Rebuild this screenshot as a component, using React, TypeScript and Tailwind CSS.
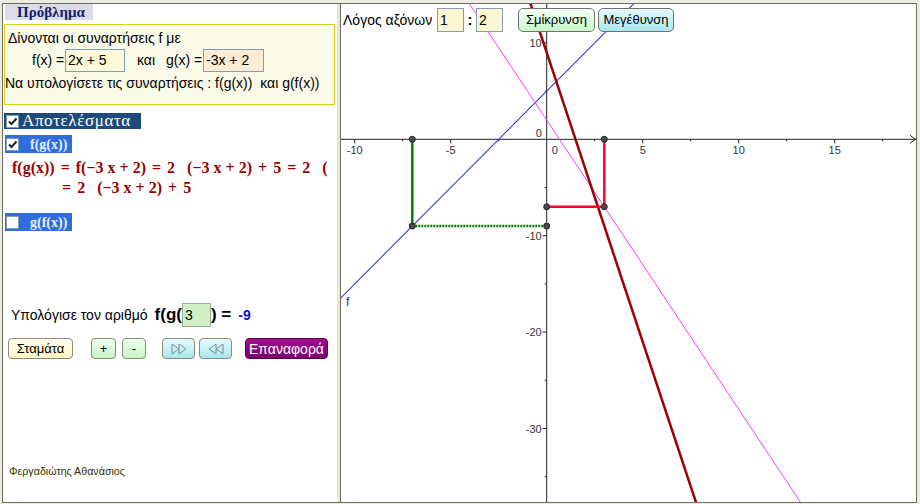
import React from 'react';

const OX = 205.7;
const OY = 135.3;
const UX = 19.2;
const UY = 9.64;
const px = (x: number) => OX + UX * x;
const py = (y: number) => OY - UY * y;

function Check({checked}: {checked: boolean}) {
    return (
        <span className="flex h-[13px] w-[13px] shrink-0 items-center justify-center border border-[#7f9db9] bg-white">
            {checked && (
                <svg width="11" height="11" viewBox="0 0 11 11">
                    <path d="M2 5.5 L4.5 8 L9.5 2.5" stroke="#222" strokeWidth="2" fill="none"/>
                </svg>
            )}
        </span>
    );
}

function Op({children}: {children: React.ReactNode}) {
    return <span className="mx-[6px]">{children}</span>;
}

function Graph() {
    const xTicks = [-10, -7.5, -5, -2.5, 2.5, 5, 7.5, 10, 12.5, 15, 17.5];
    const yTicks = [10, 5, -5, -10, -15, -20, -25, -30, -35];
    const pts: [number, number][] = [[-7, 0], [-7, -9], [0, -9], [3, 0], [3, -7], [0, -7]];
    return (
        <svg className="absolute inset-0" width="575" height="498" viewBox="0 0 575 498">
            {/* axes */}
            <line x1="0" y1={OY} x2="575" y2={OY} stroke="#222" strokeWidth="1"/>
            <path d={`M569 ${OY - 4} L574.5 ${OY} L569 ${OY + 4}`} stroke="#222" fill="none"/>
            <line x1={OX} y1="0" x2={OX} y2="498" stroke="#222" strokeWidth="1"/>
            {xTicks.map((t) => (
                <line key={t} x1={px(t)} y1={OY} x2={px(t)} y2={OY + (t % 5 === 0 ? 4 : 2)} stroke="#222"/>
            ))}
            {yTicks.map((t) => (
                <line key={t} x1={OX} y1={py(t)} x2={OX - (t % 10 === 0 ? 4 : 2)} y2={py(t)} stroke="#222"/>
            ))}
            <g fontFamily="'Liberation Sans', Arial, sans-serif" fontSize="11" fill="#333">
                {[-10, -5, 5, 10, 15].map((t) => (
                    <text key={t} x={px(t)} y={OY + 15} textAnchor="middle">{t < 0 ? `-${-t}` : t}</text>
                ))}
                <text x={OX + 5} y={OY + 15}>0</text>
                <text x={OX - 11} y={OY - 2}>0</text>
                {[10, -10, -20, -30].map((t) => (
                    <text key={t} x={OX - 5} y={py(t) + 4} textAnchor="end">{t < 0 ? `-${-t}` : t}</text>
                ))}
                <text x="5" y="302" fill="#2222cc" fontSize="12">f</text>
            </g>
            {/* f(x) = 2x + 5 */}
            <line x1={px(-11)} y1={py(-17)} x2={px(5)} y2={py(15)} stroke="#3a3ad8" strokeWidth="1.1"/>
            {/* g(x) = -3x + 2 */}
            <line x1={px(-5)} y1={py(17)} x2={px(14)} y2={py(-40)} stroke="#ff3cff" strokeWidth="1"/>
            {/* f(g(x)) = -6x + 9 */}
            <line x1={px(-1)} y1={py(15)} x2={px(8)} y2={py(-39)} stroke="#990000" strokeWidth="2.5"/>
            <line x1={px(-7)} y1={py(0)} x2={px(-7)} y2={py(-9)} stroke="#0a7a0a" strokeWidth="2.5"/>
            <line x1={px(-7)} y1={py(-9)} x2={px(0)} y2={py(-9)} stroke="#0a7a0a" strokeWidth="2.5" strokeDasharray="2 1"/>
            {/* construction for g at x = 3 */}
            <line x1={px(3)} y1={py(0)} x2={px(3)} y2={py(-7)} stroke="#ff0033" strokeWidth="2.5"/>
            <line x1={px(0)} y1={py(-7)} x2={px(3)} y2={py(-7)} stroke="#ff0033" strokeWidth="2.5"/>
            {pts.map(([x, y]) => (
                <circle key={`${x},${y}`} cx={px(x)} cy={py(y)} r="3" fill="#4a4a4a" stroke="#222" strokeWidth="1"/>
            ))}
        </svg>
    );
}

function Tri({dir}: {dir: 'r' | 'l'}) {
    const a = dir === 'r' ? 'M1 1 L8 6 L1 11 Z M8 1 L15 6 L8 11 Z' : 'M8 1 L1 6 L8 11 Z M15 1 L8 6 L15 11 Z';
    return (
        <svg width="16" height="12" viewBox="0 0 16 12">
            <path d={a} stroke="#7a8a90" strokeWidth="1" fill="none"/>
        </svg>
    );
}

export default function App() {
    return (
        <div className="h-[504px] w-[920px] bg-[#ecebe4] pl-[2px] pt-[3px] font-['Liberation_Sans',Arial,sans-serif] text-black">
            <div className="flex h-[500px] w-[915px] border border-[#6e6e5e] bg-white">
                {/* left pane */}
                <div className="flex w-[337px] shrink-0 flex-col overflow-hidden border-r-[3px] border-[#e9e5d8]">
                    <div className="ml-[2px] flex h-[16px] w-[88px] items-center bg-[#dcdce6] pl-[12px] font-['Liberation_Serif',serif] text-[15px] font-bold text-[#14206e]">
                        Πρόβλημα
                    </div>
                    <div className="ml-[1px] mt-[4px] h-[81px] w-[331px] border border-[#d6cf1c] bg-[#fafae8] text-[14px]">
                        <div className="mt-[5px] pl-[3px] leading-[16px]">Δίνονται οι συναρτήσεις f με</div>
                        <div className="mt-[3px] flex h-[23px] items-center pl-[27px]">
                            <span className="w-[33px] whitespace-nowrap">f(x) =</span>
                            <span className="flex h-[23px] w-[60px] items-center border border-[#7f9db9] bg-[#fdf8d8] pl-[2px]">2x + 5</span>
                            <span className="ml-[12px] w-[29px]">και</span>
                            <span className="w-[37px] whitespace-nowrap">g(x) =</span>
                            <span className="flex h-[23px] w-[61px] items-center border border-[#7f9db9] bg-[#fdebd5] pl-[2px]">-3x + 2</span>
                        </div>
                        <div className="mt-[3px] whitespace-nowrap leading-[16px]">Να υπολογίσετε τις συναρτήσεις : f(g(x))&nbsp; και g(f(x))</div>
                    </div>
                    <div className="ml-[1px] mt-[8px] flex h-[16px] w-[137px] items-center gap-[3px] bg-[#1d4a78] pl-[2px] font-['Liberation_Serif',serif] text-[17px] tracking-[0.6px] text-white">
                        <Check checked/>
                        <span>Αποτελέσματα</span>
                    </div>
                    <div className="ml-[2px] mt-[6px] flex h-[18px] w-[67px] items-center bg-[#2f6ddd] pl-[1px] font-['Liberation_Serif',serif] text-[14px] font-bold text-[#e6f0ff]">
                        <Check checked/>
                        <span className="ml-[11px]">f(g(x))</span>
                    </div>
                    <div className="ml-[9px] mt-[5px] whitespace-nowrap font-['Liberation_Serif',serif] text-[16px] font-bold leading-[20px] text-[#990000]">
                        <div>
                            <span>f(g(x))</span><Op>=</Op><span>f(−3 x + 2)</span><Op>=</Op><span>2</span>
                            <span className="ml-[12px]">(−3 x + 2)</span><Op>+</Op><span>5</span><Op>=</Op><span>2</span>
                            <span className="ml-[12px]">(</span>
                        </div>
                        <div className="pl-[50px]">
                            <span>=</span><span className="ml-[6px]">2</span><span className="ml-[12px]">(−3 x + 2)</span><Op>+</Op><span>5</span>
                        </div>
                    </div>
                    <div className="ml-[2px] mt-[15px] flex h-[18px] w-[67px] items-center bg-[#2f6ddd] pl-[1px] font-['Liberation_Serif',serif] text-[14px] font-bold text-[#e6f0ff]">
                        <Check checked={false}/>
                        <span className="ml-[11px]">g(f(x))</span>
                    </div>
                    <div className="ml-[8px] mt-[72px] flex h-[24px] items-center">
                        <span className="text-[14px]">Υπολόγισε τον αριθμό</span>
                        <span className="ml-[7px] text-[17px] font-bold">f(g(</span>
                        <span className="flex h-[24px] w-[29px] items-center border border-[#8fb0a0] bg-[#d3f0c4] pl-[2px] text-[14px]">3</span>
                        <span className="text-[17px] font-bold">) =</span>
                        <span className="ml-[7px] text-[14px] font-bold text-[#1010d0]">-9</span>
                    </div>
                    <div className="mt-[11px] flex h-[21px] items-stretch text-[13px]">
                        <button className="ml-[5px] w-[65px] rounded-[4px] border border-[#8a8a7a] bg-gradient-to-b from-[#fffff0] to-[#fdf6c4]">Σταμάτα</button>
                        <button className="ml-[18px] w-[25px] rounded-[4px] border border-[#8a8a7a] bg-gradient-to-b from-[#f0fff0] to-[#c6f7c6]">+</button>
                        <button className="ml-[6px] w-[24px] rounded-[4px] border border-[#8a8a7a] bg-gradient-to-b from-[#f0fff0] to-[#c6f7c6]">-</button>
                        <button className="ml-[16px] flex w-[33px] items-center justify-center rounded-[4px] border border-[#8a8a7a] bg-gradient-to-b from-[#e6fbfc] to-[#a8e8f0]"><Tri dir="r"/></button>
                        <button className="ml-[4px] flex w-[33px] items-center justify-center rounded-[4px] border border-[#8a8a7a] bg-gradient-to-b from-[#e6fbfc] to-[#a8e8f0]"><Tri dir="l"/></button>
                        <button className="ml-[13px] w-[83px] rounded-[4px] border border-[#5a0050] bg-gradient-to-b from-[#a0108f] to-[#7a0070] text-[14px] text-white">Επαναφορά</button>
                    </div>
                    <div className="ml-[6px] mt-[106px] text-[10.7px] leading-[12px] text-[#333300]">Φεργαδιώτης Αθανάσιος</div>
                </div>
                <div className="w-px shrink-0 bg-[#6e6e5e]"/>
                {/* graphics pane */}
                <div className="relative flex-1 overflow-hidden">
                    <Graph/>
                    <div className="absolute left-[2px] top-[4px] flex h-[24px] items-center">
                        <span className="w-[94px] text-[14px]">Λόγος αξόνων</span>
                        <span className="flex h-[24px] w-[27px] items-center border border-[#7f9db9] bg-[#fdf6d2] pl-[2px] text-[14px]">1</span>
                        <span className="w-[12px] text-center text-[15px] font-bold">:</span>
                        <span className="flex h-[24px] w-[27px] items-center border border-[#7f9db9] bg-[#fdf6d2] pl-[2px] text-[14px]">2</span>
                        <button className="ml-[15px] h-[24px] w-[77px] rounded-[5px] border border-[#707070] bg-gradient-to-b from-[#f6fff6] to-[#c8f8c8] text-[13px]">Σμίκρυνση</button>
                        <button className="ml-[3px] h-[24px] w-[76px] rounded-[5px] border border-[#707070] bg-gradient-to-b from-[#e6fbfc] to-[#a8e8f0] text-[13px]">Μεγέθυνση</button>
                    </div>
                </div>
            </div>
        </div>
    );
}
